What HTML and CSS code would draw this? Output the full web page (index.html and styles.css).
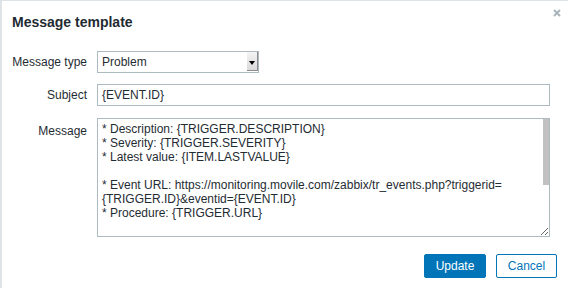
FILE: index.html
```html
<!DOCTYPE html>
<html lang="en">
<head>
    <meta charset="UTF-8">
    <title>Message template</title>
    <link rel="stylesheet" href="styles.css">
</head>
<body>
    <div class="dialog">
        <div class="dialog-header">
            <h4>Message template</h4>
            <button type="button" class="btn-close" title="Close">
                <svg width="8" height="8" viewBox="0 0 8 8"><path d="M1 1L7 7M7 1L1 7" stroke="#a9b4ba" stroke-width="2"/></svg>
            </button>
        </div>
        <form class="form-grid" id="messageTemplateForm">
            <label for="messageType" class="form-label">Message type</label>
            <div class="select-wrap">
                <select id="messageType" name="messageType">
                    <option value="0" selected>Problem</option>
                    <option value="1">Recovery</option>
                    <option value="2">Update</option>
                </select>
            </div>

            <label for="subject" class="form-label">Subject</label>
            <input type="text" id="subject" name="subject" value="{EVENT.ID}">

            <label for="message" class="form-label label-top">Message</label>
            <div class="textarea-wrap">
                <textarea id="message" name="message">* Description: {TRIGGER.DESCRIPTION}
* Severity: {TRIGGER.SEVERITY}
* Latest value: {ITEM.LASTVALUE}

* Event URL: https://monitoring.movile.com/zabbix/tr_events.php?triggerid=
{TRIGGER.ID}&amp;eventid={EVENT.ID}
* Procedure: {TRIGGER.URL}

Problem started at {EVENT.TIME} on {EVENT.DATE}
Problem name: {EVENT.NAME}
Host: {HOST.NAME}
Severity: {EVENT.SEVERITY}
Operational data: {EVENT.OPDATA}
Original problem ID: {EVENT.ID}</textarea>
                <span class="scroll-thumb"></span>
            </div>
        </form>
        <div class="dialog-footer">
            <button type="submit" form="messageTemplateForm" class="btn">Update</button>
            <button type="button" class="btn btn-alt">Cancel</button>
        </div>
    </div>
</body>
</html>
```

FILE: styles.css
```css
html, body {
    height: 100%;
}
body {
    margin: 0;
    padding: 1px 0 0 2px;
    box-sizing: border-box;
    background-color: #dde3e7;
    font-family: 'Liberation Sans', Arial, sans-serif;
    font-size: 12px;
    color: #1f2c33;
    overflow: hidden;
}
.dialog {
    background: #fff;
    height: 100%;
    padding: 0 10px;
}
.dialog-header {
    display: flex;
    justify-content: space-between;
    align-items: flex-start;
    height: 50px;
}
.dialog-header h4 {
    margin: 0;
    padding-top: 13px;
    font-size: 14px;
    font-weight: bold;
    line-height: 16px;
    color: #1f2c33;
}
.btn-close {
    border: none;
    background: none;
    padding: 0;
    margin: 8px -3px 0 0;
    width: 8px;
    height: 8px;
    cursor: pointer;
}
.btn-close svg {
    display: block;
}
.form-grid {
    display: grid;
    grid-template-columns: 75px 453px;
    column-gap: 10px;
    row-gap: 11px;
    align-items: center;
}
.form-label {
    text-align: right;
    line-height: 14px;
}
.label-top {
    align-self: start;
    padding-top: 6px;
    margin-top: 1px;
}
input[type="text"],
select,
textarea {
    font-family: inherit;
    font-size: 12px;
    color: #1f2c33;
    border: 1px solid #acbbc2;
    background: #fff;
    box-sizing: border-box;
    margin: 0;
    outline: none;
}
input[type="text"] {
    width: 100%;
    height: 22px;
    padding: 0 4px;
}
.select-wrap {
    position: relative;
    width: 162px;
}
select {
    appearance: none;
    -webkit-appearance: none;
    width: 100%;
    height: 22px;
    padding: 0 4px;
    border-radius: 0;
}
.select-wrap::after {
    content: "";
    position: absolute;
    top: 1px;
    right: 1px;
    width: 10px;
    height: 18px;
    background: linear-gradient(#f4f4f4, #dadada);
    border-right: 1px solid #8c8c8c;
    border-bottom: 1px solid #8c8c8c;
    pointer-events: none;
}
.select-wrap::before {
    content: "";
    position: absolute;
    z-index: 1;
    top: 10px;
    right: 4px;
    border-left: 3px solid transparent;
    border-right: 3px solid transparent;
    border-top: 4px solid #000;
    pointer-events: none;
}
.textarea-wrap {
    position: relative;
    margin-top: 1px;
    height: 119px;
}
textarea {
    display: block;
    width: 100%;
    height: 119px;
    padding: 3px 10px 3px 4px;
    line-height: normal;
    resize: both;
}
.scroll-thumb {
    position: absolute;
    top: 1px;
    right: 1px;
    width: 6px;
    height: 66px;
    background: #c1c1c1;
    pointer-events: none;
}
.dialog-footer {
    display: flex;
    justify-content: flex-end;
    gap: 10px;
    margin-top: 17px;
    padding-right: 1px;
}
.btn {
    font-family: inherit;
    font-size: 12px;
    height: 24px;
    padding: 0 10px;
    min-width: 62px;
    border: 1px solid #0275b8;
    border-radius: 2px;
    background-color: #0275b8;
    color: #fff;
    cursor: pointer;
}
.btn-alt {
    background-color: #fff;
    color: #0275b8;
    min-width: 61px;
}
```
